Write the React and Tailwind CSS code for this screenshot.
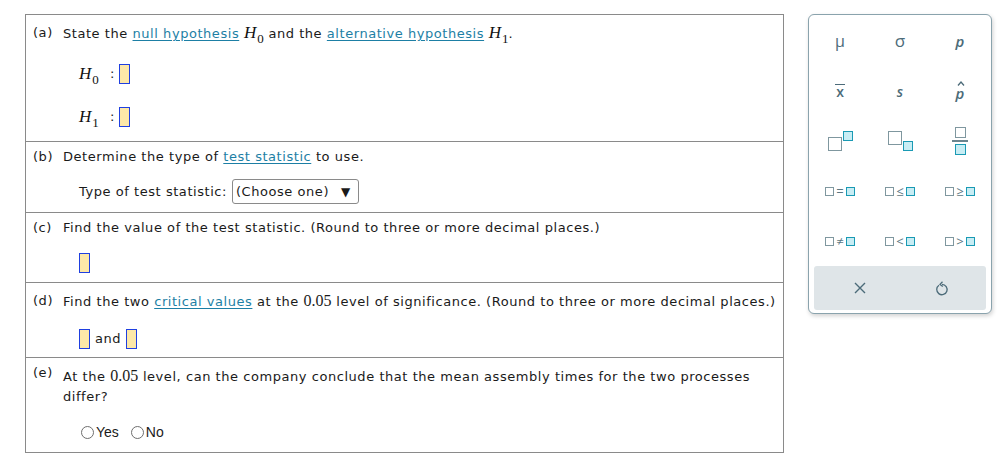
import React from "react";

const textFont = { fontFamily: '"DejaVu Sans", Verdana, sans-serif' };

function Box() {
  return <span className="inline-block w-[11px] h-[20px] border border-[#1f3fe0] bg-[#fde8a8] align-middle" />;
}

function H({ sub }) {
  return (
    <span className="font-['Liberation_Serif',serif] text-[17px] leading-[20px] tracking-normal text-[#111]">
      <i>H</i>
      <span className="inline-block text-[13px] ml-[1px] translate-y-[5px]">{sub}</span>
    </span>
  );
}

function Num({ children }) {
  return <span className="font-['Liberation_Serif',serif] text-[16px] leading-[20px] tracking-normal">{children}</span>;
}

function Link({ children }) {
  return <span className="text-[#1d7fa5] underline underline-offset-2">{children}</span>;
}

function Row({ label, className, children }) {
  return (
    <div className={"flex border-b border-[#8a8a8a] last:border-b-0 " + className}>
      <div className="w-[37px] pl-[7px] shrink-0">{label}</div>
      <div className="flex-1">{children}</div>
    </div>
  );
}

function Sq({ filled }) {
  return filled ? (
    <span className="inline-block w-[9px] h-[9px] border-[1.5px] border-[#1a9ab4] bg-[#c8edf4]" />
  ) : (
    <span className="inline-block w-[9px] h-[9px] border-[1.5px] border-[#7f979f] bg-white" />
  );
}

function Rel({ op }) {
  return (
    <span className="flex items-center gap-[1px] text-[#5a7682] text-[13px] leading-none">
      <Sq />
      <span className="w-[10px] text-center">{op}</span>
      <Sq filled />
    </span>
  );
}

function Palette() {
  const cell = "h-[50px] flex items-center justify-center";
  return (
    <div className="w-[184px] h-[300px] border border-[#8aa3ad] rounded-[6px] shadow-[1px_2px_4px_rgba(0,0,0,0.18)] bg-white flex flex-col px-[1px] pt-[1px]">
      <div className="grid grid-cols-3 text-[#4c6b79]" style={{ fontFamily: '"Open Sans", sans-serif' }}>
        <div className={cell}><span className="text-[16px]">μ</span></div>
        <div className={cell}><span className="text-[17px]">σ</span></div>
        <div className={cell}><span className="text-[15px] italic font-semibold">p</span></div>
        <div className={cell}>
          <span className="text-[14px] font-semibold border-t-[1.5px] border-[#4c6b79] leading-[14px] px-[1px]">x</span>
        </div>
        <div className={cell}><span className="text-[14px] italic font-semibold">s</span></div>
        <div className={cell}>
          <span className="flex flex-col items-center">
            <svg width="8" height="5" viewBox="0 0 8 5" fill="none" stroke="currentColor" strokeWidth="1.3" className="ml-[2px]">
              <path d="M1 4.5L4 1L7 4.5" />
            </svg>
            <span className="text-[15px] italic font-semibold leading-[15px]">p</span>
          </span>
        </div>
        <div className={cell}>
          <span className="flex items-start">
            <span className="mt-[6px] inline-block w-[14px] h-[14px] border-[1.5px] border-[#7f979f]" />
            <span className="ml-[1px] inline-block w-[10px] h-[10px] border-[1.5px] border-[#1a9ab4] bg-[#c8edf4]" />
          </span>
        </div>
        <div className={cell}>
          <span className="flex items-end">
            <span className="mb-[6px] inline-block w-[14px] h-[14px] border-[1.5px] border-[#7f979f]" />
            <span className="ml-[1px] inline-block w-[10px] h-[10px] border-[1.5px] border-[#1a9ab4] bg-[#c8edf4]" />
          </span>
        </div>
        <div className={cell}>
          <span className="flex flex-col items-center">
            <span className="inline-block w-[11px] h-[11px] border-[1.5px] border-[#7f979f]" />
            <span className="my-[2px] w-[16px] h-[2px] bg-[#6a848e]" />
            <span className="inline-block w-[11px] h-[11px] border-[1.5px] border-[#1a9ab4] bg-[#c8edf4]" />
          </span>
        </div>
        <div className={cell}><Rel op="=" /></div>
        <div className={cell}><Rel op="≤" /></div>
        <div className={cell}><Rel op="≥" /></div>
        <div className={cell}><Rel op="≠" /></div>
        <div className={cell}><Rel op="<" /></div>
        <div className={cell}><Rel op=">" /></div>
      </div>
      <div className="mx-[4px] h-[44px] rounded-[3px] bg-[#dfe5e8] grid grid-cols-2 text-[#4c6b79]">
        <div className="flex items-center justify-center pl-[6px]">
          <svg width="12" height="12" viewBox="0 0 12 12" stroke="currentColor" strokeWidth="1.4" fill="none">
            <path d="M1 1L11 11M11 1L1 11" />
          </svg>
        </div>
        <div className="flex items-center justify-center pr-[2px]">
          <svg width="14" height="15" viewBox="0 0 14 15" stroke="currentColor" strokeWidth="1.3" fill="none">
            <path d="M4 4.2A5.2 5.2 0 1 0 7 3.3" />
            <path d="M7.5 0.8L5 3.4L7.8 5.6" />
          </svg>
        </div>
      </div>
    </div>
  );
}

export default function App() {
  return (
    <div className="w-[1004px] h-[466px] bg-white flex items-start pt-[14px] pl-[25px]" style={textFont}>
      <div className="w-[759px] border border-[#8a8a8a] text-[13px] tracking-[0.55px] leading-[20px] text-[#1a1a1a]">
        <Row label="(a)" className="h-[127px] pt-[8px]">
          <div>
            State the <Link>null hypothesis</Link> <H sub="0" /> and the <Link>alternative hypothesis</Link> <H sub="1" />.
          </div>
          <div className="mt-[20px] pl-[16px] flex items-center h-[20px]">
            <span className="w-[31px]"><H sub="0" /></span>
            <span className="mr-[4px]">:</span>
            <Box />
          </div>
          <div className="mt-[23px] pl-[16px] flex items-center h-[20px]">
            <span className="w-[31px]"><H sub="1" /></span>
            <span className="mr-[4px]">:</span>
            <Box />
          </div>
        </Row>
        <Row label="(b)" className="h-[71px] pt-[5px]">
          <div>
            Determine the type of <Link>test statistic</Link> to use.
          </div>
          <div className="mt-[12px] pl-[16px] flex items-center">
            <span>Type of test statistic:</span>
            <span className="ml-[5px] h-[25px] w-[127px] border border-[#8a8a8a] rounded-[3px] flex items-center pl-[3px] text-[13px]">
              (Choose one)
              <span className="ml-[12px] text-[12px]">▼</span>
            </span>
          </div>
        </Row>
        <Row label="(c)" className="h-[70px] pt-[5px]">
          <div>Find the value of the test statistic. (Round to three or more decimal places.)</div>
          <div className="mt-[15px] pl-[16px] flex items-center h-[20px]">
            <Box />
          </div>
        </Row>
        <Row label="(d)" className="h-[75px] pt-[8px]">
          <div>
            Find the two <Link>critical values</Link> at the <Num>0.05</Num> level of significance. (Round to three or more decimal places.)
          </div>
          <div className="mt-[17px] pl-[16px] flex items-center h-[20px] gap-[5px]">
            <Box />
            <span>and</span>
            <Box />
          </div>
        </Row>
        <Row label={<span className="relative -top-[3px]">(e)</span>} className="h-[94px] pt-[8px]">
          <div>
            <div>
              At the <Num>0.05</Num> level, can the company conclude that the mean assembly times for the two processes
            </div>
            <div>differ?</div>
          </div>
          <div className="mt-[15px] pl-[18px] flex items-center gap-[12px] text-[14px] tracking-normal" style={{ fontFamily: '"Liberation Sans", Arial, sans-serif' }}>
            <span className="flex items-center gap-[2px]">
              <span className="inline-block w-[13px] h-[13px] rounded-full border border-[#6e6e6e]" />
              Yes
            </span>
            <span className="flex items-center gap-[2px]">
              <span className="inline-block w-[13px] h-[13px] rounded-full border border-[#6e6e6e]" />
              No
            </span>
          </div>
        </Row>
      </div>
      <div className="ml-[24px]">
        <Palette />
      </div>
    </div>
  );
}
